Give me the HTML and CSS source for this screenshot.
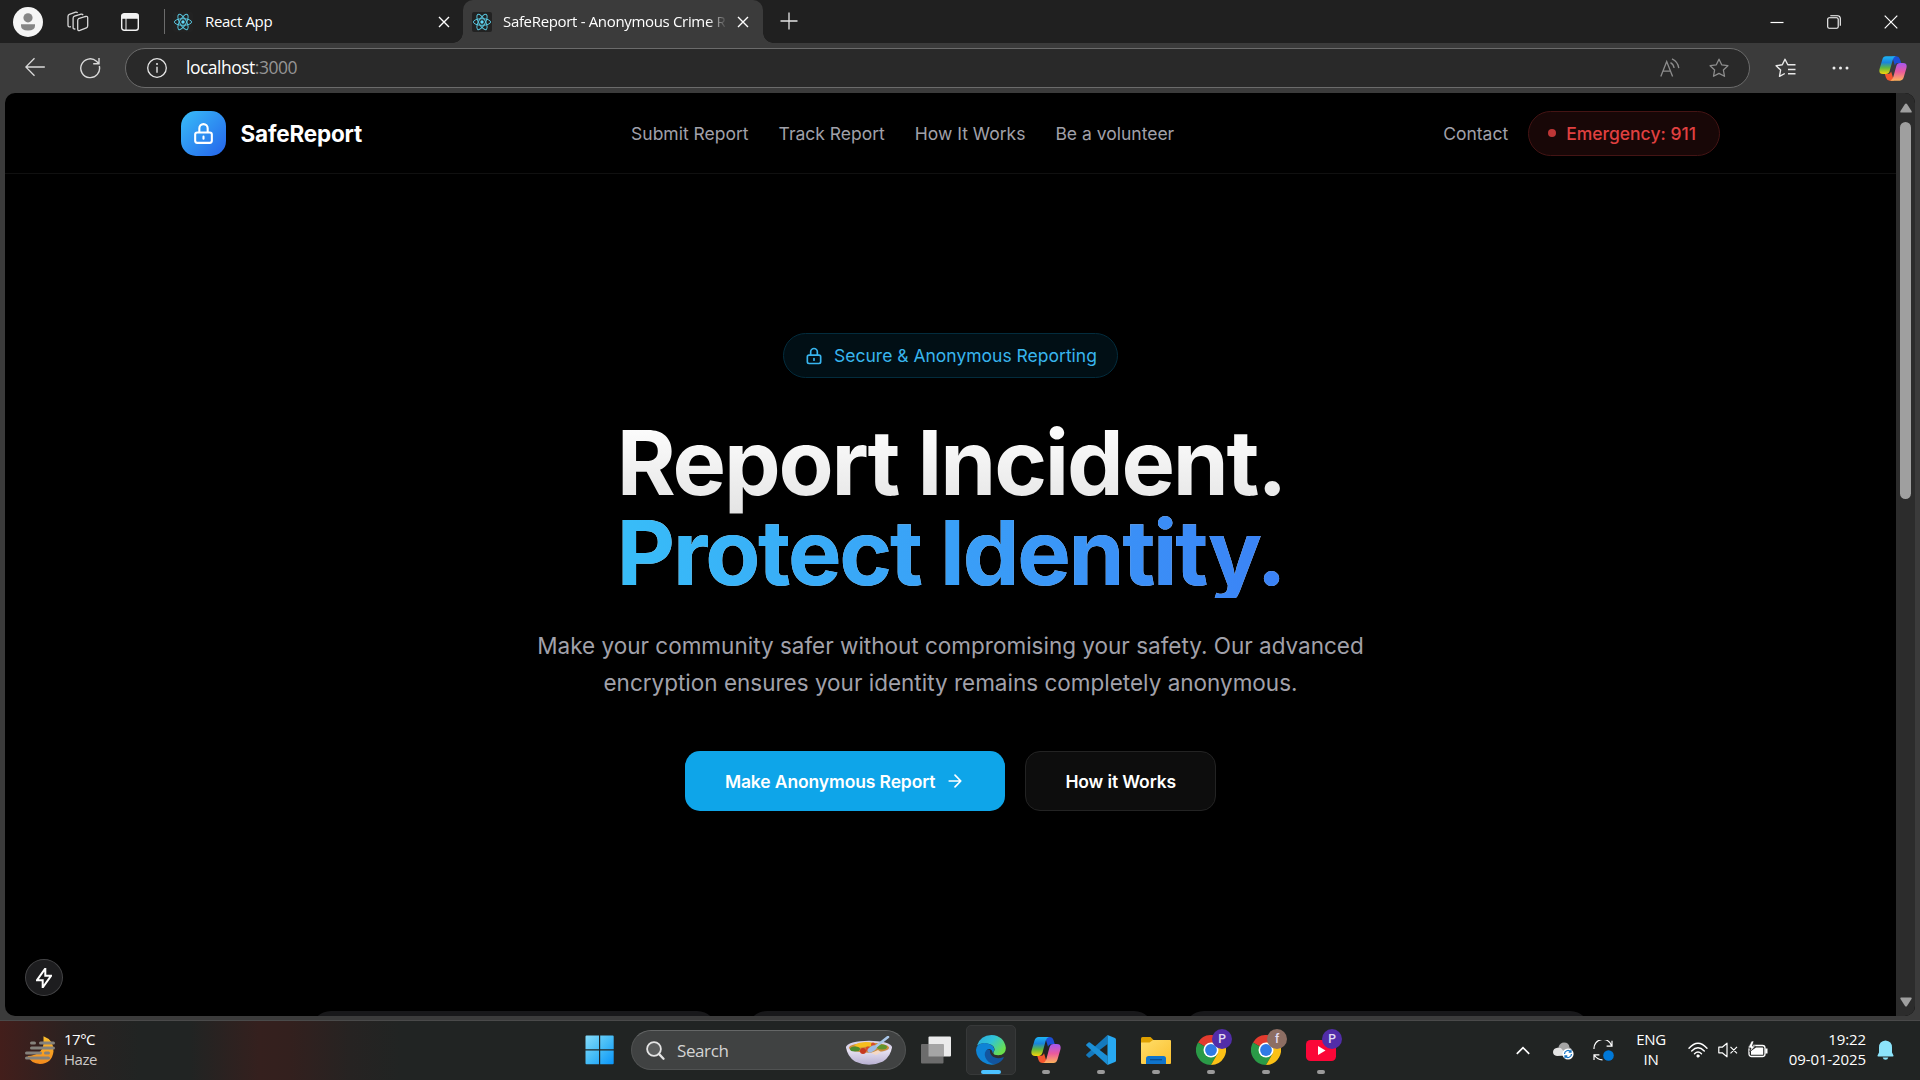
FILE: index.html
```html
<!DOCTYPE html>
<html lang="en">
<head>
<meta charset="utf-8">
<title>SafeReport - Anonymous Crime Reporting</title>
<link rel="stylesheet" href="styles.css">
</head>
<body>
<svg class="defs" width="0" height="0" aria-hidden="true">
  <defs>
    <linearGradient id="cpBlue" x1="0" y1="0" x2="0" y2="1"><stop offset="0" stop-color="#1db4f5"/><stop offset=".35" stop-color="#1a84dc"/><stop offset=".65" stop-color="#5fb840"/><stop offset="1" stop-color="#f7d40a"/></linearGradient>
    <linearGradient id="cpPink" x1="0" y1="0" x2="0" y2="1"><stop offset="0" stop-color="#a557f0"/><stop offset=".5" stop-color="#ea5a9c"/><stop offset="1" stop-color="#fdb25c"/></linearGradient>
    <linearGradient id="edgeTop" x1="0" y1="0" x2="1" y2=".6"><stop offset="0" stop-color="#2aa8dc"/><stop offset=".5" stop-color="#30c3d8"/><stop offset="1" stop-color="#6be04c"/></linearGradient>
    <linearGradient id="winFill" x1="0" y1="0" x2="1" y2="1"><stop offset="0" stop-color="#86dcfb"/><stop offset=".5" stop-color="#45bcf6"/><stop offset="1" stop-color="#0a95fa"/></linearGradient>
    <linearGradient id="folderFill" x1="0" y1="0" x2="1" y2="1"><stop offset="0" stop-color="#ffdd6a"/><stop offset="1" stop-color="#fbc02e"/></linearGradient>
    <linearGradient id="sunFill" x1="0" y1="0" x2="0" y2="1"><stop offset="0" stop-color="#fdbf2d"/><stop offset="1" stop-color="#f48a1c"/></linearGradient>
    <linearGradient id="bowlFill" x1="0" y1="0" x2="0" y2="1"><stop offset="0" stop-color="#f2eef9"/><stop offset="1" stop-color="#b8b0d2"/></linearGradient>
    <symbol id="react" viewBox="0 0 20 20">
      <rect width="20" height="20" rx="2" fill="#222"/>
      <g fill="none" stroke="#58c4dc" stroke-width="1"><ellipse cx="10" cy="10" rx="8.6" ry="3.3"/><ellipse cx="10" cy="10" rx="8.6" ry="3.3" transform="rotate(60 10 10)"/><ellipse cx="10" cy="10" rx="8.6" ry="3.3" transform="rotate(120 10 10)"/></g>
      <circle cx="10" cy="10" r="1.7" fill="#61dafb"/>
    </symbol>
    <symbol id="lock" viewBox="0 0 24 24"><path d="M12 15v2m-6 4h12a2 2 0 002-2v-6a2 2 0 00-2-2H6a2 2 0 00-2 2v6a2 2 0 002 2zm10-10V7a4 4 0 00-8 0v4h8z" fill="none" stroke="currentColor" stroke-width="2" stroke-linecap="round" stroke-linejoin="round"/></symbol>
    <symbol id="copilot" viewBox="0 0 30 28">
      <path d="M14 1h4.500q3 0 4 3l1.300 4.200h-4q-2 0-2.800 2.500z" fill="#1c4fd6"/>
      <path d="M16 27h-4.500q-3 0-4-3L6.200 19.800h4q2 0 2.800-2.500z" fill="#f4562f"/>
      <path d="M7.500 1H18q-2.500.8-3.300 3.800L11.500 16.500q-.9 3.400-4.200 3.400H4.200Q-.6 19.900.6 14.500L3.500 4.500Q4.600 1 7.500 1z" fill="url(#cpBlue)"/>
      <path d="M22.500 27H12q2.500-.8 3.300-3.800l3.200-11.700q.9-3.400 4.200-3.400h3.100q4.800 0 3.600 5.400l-2.900 10q-1.100 3.500-4 3.500z" fill="url(#cpPink)"/>
    </symbol>
    <symbol id="close" viewBox="0 0 12 12"><path d="M1 1l10 10M11 1L1 11" stroke="currentColor" stroke-width="1.400" fill="none"/></symbol>
    <symbol id="chrome" viewBox="0 0 30 30">
      <path d="M15 15L2 7.500A15 15 0 0 1 28 7.500z" fill="#e33b2e"/>
      <path d="M15 15L2 7.500A15 15 0 0 0 15 30L21.500 18.800z" fill="#2a9a47"/>
      <path d="M15 7.500H28A15 15 0 0 1 15 30L21.500 18.800z" fill="#fbc116"/>
      <circle cx="15" cy="15" r="7.500" fill="#fff"/><circle cx="15" cy="15" r="5.900" fill="#2f7ae5"/>
    </symbol>
  </defs>
</svg>

<div class="window">
  <header class="tabs">
    <div class="tabs-left">
      <svg class="avatar" viewBox="0 0 30 30"><circle cx="15" cy="15" r="15" fill="#f5f5f5"/><circle cx="15" cy="10.800" r="4.600" fill="#858585"/><path d="M8 17.300h14v1.400q0 4.800-7 4.800t-7-4.800z" fill="#858585"/></svg>
      <svg class="workspaces" viewBox="0 0 22 22" fill="none" stroke="#d8d8d8" stroke-width="1.300"><path d="M11.500 7.700l7.200-2.200q2-.5 2 1.300v8q0 1.500-1.300 2l-6.500 2.600q-2.200.8-2.200-1.400V9.700q0-1.500.8-2z"/><path d="M8.400 17.900q-2.300.5-2.300-1.500V7.200q0-1.500 1.400-2l6.600-2q1.300-.3 2 .9"/><path d="M4 15.700Q1 16.500 1 14.200V5.500Q1 4 2.400 3.400l6.200-2.200q1.300-.4 2 .7"/></svg>
      <svg class="vertical-tabs" viewBox="0 0 18 18"><rect x=".7" y=".7" width="16.600" height="16.600" rx="2.500" fill="none" stroke="#f2f2f2" stroke-width="1.400"/><path d="M1 1.500h16v3.700H1zM5 5v12" fill="#f2f2f2" stroke="#f2f2f2"/></svg>
    </div>
    <div class="tab tab-idle"><svg class="favicon"><use href="#react"/></svg><span class="tab-title">React App</span><svg class="tab-close"><use href="#close"/></svg></div>
    <div class="tab tab-active"><svg class="favicon"><use href="#react"/></svg><span class="tab-title">SafeReport - Anonymous Crime Reporting</span><svg class="tab-close"><use href="#close"/></svg></div>
    <svg class="new-tab" viewBox="0 0 18 18"><path d="M9 .5v17M.5 9h17" stroke="#e4e4e4" stroke-width="1.300"/></svg>
    <div class="win-controls">
      <svg viewBox="0 0 14 14"><path d="M.5 7.500h13" stroke="#fff" stroke-width="1.200"/></svg>
      <svg viewBox="0 0 14 14" fill="none" stroke="#fff" stroke-width="1.100"><rect x=".7" y="2.800" width="10.500" height="10.500" rx="1.500"/><path d="M3.300.8h7.200q2.800 0 2.800 2.800v7.200"/></svg>
      <svg viewBox="0 0 14 14"><path d="M.7.700l12.600 12.600M13.300.700L.7 13.300" stroke="#fff" stroke-width="1.200"/></svg>
    </div>
  </header>

  <div class="toolbar">
    <svg class="back" viewBox="0 0 20 20" fill="none" stroke="#dadada" stroke-width="1.300"><path d="M19.800 10H.8M9.500 1.200L.8 10l8.700 8.800"/></svg>
    <svg class="reload" viewBox="0 0 22 22" fill="none" stroke="#dadada" stroke-width="1.400"><path d="M20.300 9A9.400 9.400 0 1 1 17.500 4.300L20 6.800M20 1v5.800h-5.800"/></svg>
    <div class="address">
      <svg class="info" viewBox="0 0 20 20"><circle cx="10" cy="10" r="9.300" fill="none" stroke="#e6e6e6" stroke-width="1.300"/><path d="M10 8.800v6" stroke="#e6e6e6" stroke-width="1.400"/><circle cx="10" cy="6" r="1" fill="#e6e6e6"/></svg>
      <span class="url">localhost<span class="port">:3000</span></span>
      <svg class="read-aloud" viewBox="0 0 20 20" fill="none" stroke="#8d8d8d" stroke-width="1.300"><path d="M.8 18.500L6.700 3.500l5.900 15M3 13.200h7.500M10.500 4.600q3 1.600 3.600 5.400M12 .9q6 3 6.800 9.200"/></svg>
      <svg class="star" viewBox="0 0 20 20"><path d="M10 1.200l2.700 5.600 6.200.9-4.500 4.300 1.100 6.300L10 15.400l-5.500 2.900L5.600 12 1.100 7.700l6.200-.9z" fill="none" stroke="#8d8d8d" stroke-width="1.300" stroke-linejoin="round"/></svg>
    </div>
    <svg class="favorites" viewBox="0 0 21 20" fill="none" stroke="#e8e8e8" stroke-width="1.400" stroke-linejoin="round"><path d="M20.500 6.700h-7.700L10 1.200 7.300 6.800l-6.200.9L5.600 12l-1.100 6.300 5.300-2.800M13 11.500h7.500M13 15.700h7.500"/></svg>
    <svg class="more" viewBox="0 0 17 4" fill="#ececec"><circle cx="2" cy="2" r="1.500"/><circle cx="8.500" cy="2" r="1.500"/><circle cx="15" cy="2" r="1.500"/></svg>
    <svg class="copilot-button"><use href="#copilot"/></svg>
  </div>

  <div class="viewport">
    <div class="page">
      <nav class="site-header">
        <div class="nav-inner">
          <div class="brand"><span class="brand-mark"><svg><use href="#lock"/></svg></span><span class="brand-name">SafeReport</span></div>
          <div class="links"><span>Submit Report</span><span>Track Report</span><span>How It Works</span><span>Be a volunteer</span></div>
          <div class="nav-right"><span>Contact</span><span class="emergency"><i class="dot"></i>Emergency: 911</span></div>
        </div>
      </nav>
      <main class="hero">
        <div class="badge"><svg><use href="#lock"/></svg><span>Secure &amp; Anonymous Reporting</span></div>
        <h1 class="headline">Report Incident.<span class="accent">Protect Identity.</span></h1>
        <p class="lead">Make your community safer without compromising your safety. Our advanced encryption ensures your identity remains completely anonymous.</p>
        <div class="actions">
          <div class="btn primary">Make Anonymous Report<svg viewBox="0 0 24 24" fill="none" stroke="currentColor" stroke-width="2" stroke-linecap="round" stroke-linejoin="round"><path d="M5 12h14M12 5l7 7-7 7"/></svg></div>
          <div class="btn secondary">How it Works</div>
        </div>
      </main>
      <section class="cards"><div class="card"></div><div class="card"></div><div class="card"></div></section>
      <div class="dev-badge"><svg viewBox="0 0 16 20"><path d="M9.300.5v7.200h5.900L6.700 19.500v-7.200H.8z" fill="none" stroke="#fff" stroke-width="2"/></svg></div>
    </div>
    <div class="scrollbar">
      <svg viewBox="0 0 12 10"><path d="M6 .5q.6 0 1 .6l4.500 7q.7 1.400-.7 1.400H1.200Q-.2 9.500.5 8.100L5 1.100Q5.400.5 6 .5z" fill="#9f9f9f"/></svg>
      <div class="track"><div class="thumb"></div></div>
      <svg class="down" viewBox="0 0 12 10"><path d="M6 .5q.6 0 1 .6l4.500 7q.7 1.400-.7 1.400H1.200Q-.2 9.500.5 8.100L5 1.100Q5.400.5 6 .5z" fill="#9f9f9f"/></svg>
    </div>
  </div>
</div>

<footer class="taskbar">
  <div class="weather">
    <svg viewBox="0 0 30 30"><path d="M18.500 1.200Q29 5 28.500 16.500 27 28.500 15 29 6 28.500 2.500 21 17 20.500 18.500 9z" fill="url(#sunFill)"/><path d="M6.500 8h3M15.500 8h13M6.500 13h22M1.500 18h14M20.500 18h3M1.500 23h22" stroke="#85827c" stroke-width="3" stroke-linecap="round"/></svg>
    <div class="weather-text"><span>17°C</span><span class="muted">Haze</span></div>
  </div>
  <div class="apps">
    <div class="app"><svg viewBox="0 0 30 30" class="i30"><path d="M.5 1.500q0-1 1-1H14v13.800H.5zM15.200.5h12.500q1 0 1 1v12.800H15.200zM.5 15.500H14v13.700H1.500q-1 0-1-1zM15.200 15.500h13.500v12.700q0 1-1 1H15.200z" fill="url(#winFill)"/></svg></div>
    <div class="search">
      <svg class="glass" viewBox="0 0 19 19" fill="none" stroke="#e4e4e4"><circle cx="8" cy="8" r="6.900" stroke-width="1.800" fill="#5c5e5e"/><path d="M12.900 12.900l4.600 4.800" stroke-width="2.300" stroke-linecap="round"/></svg>
      <span>Search</span>
      <svg class="bowl" viewBox="0 0 46 29"><path d="M0 11q1 9 9 14.500 14 6.500 28 0Q45 20 46 11z" fill="url(#bowlFill)"/><ellipse cx="23" cy="11" rx="23" ry="6.200" fill="#d9d3ea"/><ellipse cx="23" cy="11.800" rx="20" ry="5" fill="#c98d3c"/><path d="M8 9q9-5 19-2l-2 3-13 2z" fill="#f7bd1e"/><ellipse cx="9" cy="13" rx="5" ry="2.500" fill="#4c8a2c"/><ellipse cx="36" cy="11" rx="5" ry="2.500" fill="#61952f"/><circle cx="17" cy="15" r="3" fill="#c63820"/><circle cx="22" cy="13" r="2.500" fill="#d94a28"/><circle cx="27" cy="8.500" r="2" fill="#d94a28"/><path d="M25 17l7-3 3 2-5 3z" fill="#f5d9c6"/><path d="M42 1L28 12" stroke="#a9c6e8" stroke-width="2.600" stroke-linecap="round"/><ellipse cx="26" cy="13" rx="5" ry="2.700" transform="rotate(-30 26 13)" fill="#9dbbe4"/></svg>
    </div>
    <div class="app"><svg viewBox="0 0 30 28" class="taskview"><rect x="7.500" y=".5" width="22.500" height="20" rx="1" fill="#ebebeb"/><rect x="0" y="8" width="22.500" height="19.500" rx="1" fill="#6c6c6c"/><path d="M7.500 8h15v12.500h-15z" fill="#a5a5a5"/></svg></div>
    <div class="app current"><svg viewBox="0 0 30 30" class="i30"><path d="M1 10.500Q4.500.2 15.500 0 28 .8 29.800 12.500q.5 7.500-7.500 7.800-5.500 0-4.800-2.800 2.800-4.500-1.700-7.500Q8 6.500 1 10.500z" fill="url(#edgeTop)"/><path d="M0 15Q.3 8.500 8.300 8q8.200.5 9.900 5.500.3 2.200-1.500 4.500-.6-4.500-4.700-4-3 2.500-1.200 7.700 2.500 6.300 9.200 7.300-6.500 2.200-13-2Q.3 22.500 0 15z" fill="#0f84d6"/><path d="M11.800 14q-4.500 3.200-2.400 8.400Q12.500 29.500 20 29q5.500-2 7.800-6.300.2-.8-.8-.4-5.500 2.200-10-.5-3.500-2.600-3-6.500z" fill="#12559f"/></svg></div>
    <div class="app open"><svg class="cp"><use href="#copilot"/></svg></div>
    <div class="app open"><svg viewBox="0 0 30 30" class="i30"><path d="M21.500 0v9L4 22.500q-.8.500-1.500 0L.5 20.800q-.8-.8 0-1.600z" fill="#1479bd"/><path d="M21.500 30v-9L4 7.500Q3.200 7 2.500 7.500L.5 9.200q-.8.800 0 1.600z" fill="#1b8fd6"/><path d="M21.500 0L29 3q1 .5 1 1.500v21q0 1-1 1.500l-7.500 3z" fill="#27a9f2"/></svg></div>
    <div class="app open"><svg viewBox="0 0 30 27" class="folder"><path d="M0 1.500Q0 0 1.500 0h8L13 3.500V7H0z" fill="#dfa000"/><path d="M0 5.500h8.500L12 3h17q1 0 1 1v22q0 1-1 1H1q-1 0-1-1z" fill="url(#folderFill)"/><path d="M5 27v-5.500Q5 19 7.500 19h15q2.500 0 2.500 2.500V27z" fill="#0f74cc"/><path d="M9 22.700h12" stroke="#094a8c" stroke-width="1.200"/></svg></div>
    <div class="app open"><svg class="i30"><use href="#chrome"/></svg><b class="profile purple">P</b></div>
    <div class="app open"><svg class="i30"><use href="#chrome"/></svg><b class="profile brown">f</b></div>
    <div class="app open"><svg viewBox="0 0 30 21" class="youtube"><rect width="30" height="21" rx="4.500" fill="#fb0738"/><path d="M12 6l7.500 4.500L12 15z" fill="#fff"/></svg><b class="profile purple">P</b></div>
  </div>
  <div class="tray">
    <div class="tray-cell"><svg viewBox="0 0 14 9" class="chevron"><path d="M.8 7.800L7 1.600l6.200 6.200" fill="none" stroke="#fff" stroke-width="1.700"/></svg></div>
    <div class="tray-cell"><svg viewBox="0 0 21 18" class="cloud"><path d="M5.500 5Q7 .500 11 .500q5 0 5.500 5 2 .5 2.500 3l-7 4z" fill="#a5a5a5"/><path d="M4 14q-4-.5-4-4 .3-4 4.500-4.300Q8 5 10 8.500l4 5z" fill="#e4e4e4"/><circle cx="15" cy="12" r="5.600" fill="#fff"/><path d="M11.500 12a3.500 3.500 0 0 1 6.200-2.200M18.500 12a3.500 3.500 0 0 1-6.200 2.200M18 7.800v2.300h-2.300M12 16.200v-2.300h2.300" fill="none" stroke="#1674c4" stroke-width="1.200"/></svg></div>
    <div class="tray-cell"><svg viewBox="0 0 21 21" class="sync"><path d="M1 9A9 9 0 0 1 18.500 5.500M19 .8v5.400h-5.400M1 20v-5.200h5.400M1.300 15A9.500 9.500 0 0 0 9.500 19.800" fill="none" stroke="#fff" stroke-width="1.200"/><circle cx="15.500" cy="15.500" r="5.300" fill="#0078d7"/></svg></div>
    <div class="lang"><span>ENG</span><span>IN</span></div>
    <div class="status">
      <svg viewBox="0 0 20 16" class="wifi" fill="none" stroke="#fff" stroke-width="1.400" stroke-linecap="round"><path d="M1 6.200Q10-3.700 19 6.200M3.700 9q6.300-6.500 12.600 0M6.500 11.700q3.500-3.400 7 0"/><circle cx="10" cy="14" r="1.200" fill="#fff" stroke-width=".8"/></svg>
      <svg viewBox="0 0 20 16" class="speaker" fill="none" stroke="#fff" stroke-width="1.200" stroke-linejoin="round"><path d="M.8 5.200h3.400L9 1.200v13.600l-4.800-4H.8zM12.500 4.800l6.500 6.500M19 4.800l-6.500 6.500"/></svg>
      <svg viewBox="0 0 20 17" class="battery"><rect x="1" y="4.500" width="16" height="11" rx="2.500" fill="none" stroke="#fff" stroke-width="1.300"/><path d="M3 13.700V10l5-3.500h6.500q.7 0 .7.700v6.500z" fill="#fff"/><path d="M18.400 7.500v5" stroke="#fff" stroke-width="2.200"/><path d="M3.500 0L0 7h3L1.800 11 7.500 5H4.300L6 0z" fill="#fff" stroke="#212322" stroke-width=".7"/></svg>
    </div>
    <div class="clock"><span>19:22</span><span>09-01-2025</span></div>
    <svg viewBox="0 0 17 20" class="bell"><path d="M8.500.5Q15 1 15 7.500v5l1.500 3q.2 1-.8 1H1.300q-1 0-.8-1l1.500-3v-5Q2 1 8.500.5z" fill="#8ce4fb"/><path d="M5.700 17.500h5.600q-.5 2.200-2.800 2.200t-2.800-2.200z" fill="#8ce4fb"/></svg>
  </div>
</footer>
</body>
</html>
```
FILE: styles.css
```css
* { box-sizing: border-box; }
body { margin: 0; width: 1920px; height: 1080px; overflow: hidden; display: flex; flex-direction: column; background: #212322; font-family: "Open Sans", "Noto Sans", sans-serif; color: #fff; }
svg { display: block; flex: none; }
.defs { position: absolute; }
.window { height: 1021px; display: flex; flex-direction: column; background: #3b3b3b; border-bottom: 1px solid #4a4a4a; }

/* Tab strip */
.tabs { height: 43px; display: flex; align-items: center; background: #202020; }
.tabs-left { width: 165px; height: 25px; padding-left: 13px; display: flex; align-items: center; border-right: 1px solid #6c6c6c; }
.avatar { width: 30px; height: 30px; }
.workspaces { width: 22px; height: 22px; margin-left: 24px; }
.vertical-tabs { width: 18px; height: 18px; margin-left: 32px; }
.tab { height: 43px; display: flex; align-items: center; }
.tab-idle { width: 298px; padding: 0 13px 0 8px; }
.tab-active { position: relative; width: 300px; padding: 0 14px 0 9px; background: #3b3b3b; border-radius: 10px 10px 0 0; }
.tab-active::before, .tab-active::after { content: ""; position: absolute; bottom: 0; width: 10px; height: 10px; }
.tab-active::before { left: -10px; background: radial-gradient(circle at 0 0, #202020 9.5px, #3b3b3b 10px); }
.tab-active::after { right: -10px; background: radial-gradient(circle at 100% 0, #202020 9.5px, #3b3b3b 10px); }
.favicon { width: 20px; height: 20px; }
.tab-title { flex: 1; margin: 0 12px; padding-bottom: 2px; overflow: hidden; white-space: nowrap; font-size: 15px; line-height: 20px; letter-spacing: -.33px; }
.tab-active .tab-title { margin-left: 11px; -webkit-mask-image: linear-gradient(90deg, #000 205px, transparent 224px); mask-image: linear-gradient(90deg, #000 205px, transparent 224px); }
.tab-close { width: 12px; height: 12px; }
.new-tab { width: 18px; height: 18px; margin: 0 0 1px 17px; }
.win-controls { margin-left: auto; padding-right: 22px; display: flex; gap: 43px; }
.win-controls svg { width: 14px; height: 14px; }

/* Toolbar */
.toolbar { height: 50px; display: flex; align-items: center; padding: 0 13px 0 25px; }
.back { width: 20px; height: 20px; margin-bottom: 2px; }
.reload { width: 22px; height: 22px; margin: 0 0 1px 34px; }
.address { width: 1625px; height: 40px; margin-left: 24px; padding: 0 20px 0 21px; display: flex; align-items: center; border: 1px solid #6b6b6b; border-radius: 20px; background: #292929; }
.info { width: 20px; height: 20px; }
.url { margin-left: 19px; padding-bottom: 2px; font-size: 17.5px; letter-spacing: -.5px; }
.port { color: #959595; }
.read-aloud { width: 20px; height: 20px; margin: 0 0 1px auto; }
.star { width: 20px; height: 20px; margin-left: 29px; }
.favorites { width: 21px; height: 20px; margin-left: 25px; }
.more { width: 17px; height: 4px; margin-left: 36px; }
.copilot-button { width: 28px; height: 27px; margin-left: auto; }

/* Page viewport */
.viewport { flex: none; width: 1910px; height: 923px; margin-left: 5px; display: flex; border-radius: 10px; overflow: hidden; background: #000; }
.page { position: relative; width: 1891px; height: 923px; overflow: hidden; font-family: Inter, sans-serif; }
.site-header { height: 81px; border-bottom: 1px solid #101010; }
.nav-inner { width: 1600px; height: 80px; margin: 0 auto; padding: 0 30px; display: flex; align-items: center; justify-content: space-between; font-size: 17.5px; line-height: 25px; color: #a1a1aa; }
.brand { display: flex; align-items: center; gap: 15px; }
.brand-mark { width: 45px; height: 45px; display: grid; place-items: center; border-radius: 15px; background: linear-gradient(135deg, #38bdf8, #2563eb); color: #fff; }
.brand-mark svg { width: 25px; height: 25px; }
.brand-name { font-size: 22.5px; font-weight: 700; letter-spacing: -.18px; color: #fff; }
.links { display: flex; gap: 30px; }
.nav-right { display: flex; align-items: center; gap: 20px; }
.emergency { height: 45px; padding: 0 23.5px 0 19px; display: flex; align-items: center; gap: 10px; border: 1px solid #441414; border-radius: 23px; background: #180707; color: #e04040; font-weight: 500; }
.dot { width: 8px; height: 8px; border-radius: 50%; background: #be3636; }

.hero { display: flex; flex-direction: column; align-items: center; padding-top: 159px; }
.badge { height: 45px; padding: 0 20px; display: flex; align-items: center; gap: 10px; border: 1px solid #032c3d; border-radius: 23px; background: #010f15; color: #38b5ee; font-size: 17.5px; }
.badge svg { width: 20px; height: 20px; }
.headline { margin: 40px 0 0 1px; font-size: 90px; line-height: 90px; font-weight: 700; letter-spacing: -2.25px; color: transparent; background: linear-gradient(180deg, #fff, #ccc); -webkit-background-clip: text; background-clip: text; }
.accent { display: block; background: linear-gradient(90deg, #38bdf8, #3b82f6); -webkit-background-clip: text; background-clip: text; }
.lead { width: 840px; height: 74px; margin: 30px 0 0; text-align: center; font-size: 22.5px; line-height: 36.6px; color: #a1a1aa; }
.actions { display: flex; gap: 20px; margin-top: 49px; font-size: 17.5px; font-weight: 600; letter-spacing: -.12px; }
.btn { height: 60px; padding: 0 40px; display: flex; align-items: center; gap: 10px; border-radius: 15px; white-space: nowrap; }
.btn svg { width: 20px; height: 20px; }
.primary { background: #0ea5e9; }
.secondary { border: 1px solid #232323; background: #0d0d0d; padding: 0 39px; }
.cards { width: 1280px; margin: 200px auto 0; display: grid; grid-template-columns: repeat(3, 1fr); gap: 30px; }
.card { height: 200px; border-radius: 20px; background: #18181a; }
.dev-badge { position: absolute; left: 20px; bottom: 20px; width: 38px; height: 37px; display: grid; place-items: center; border: 1px solid #434345; border-radius: 50%; background: #1d1d1f; }
.dev-badge svg { width: 16px; height: 20px; }

.scrollbar { width: 19px; padding: 10px 0 9px; display: flex; flex-direction: column; align-items: center; background: #2c2c2c; }
.scrollbar svg { width: 12px; height: 10px; }
.track { flex: 1; padding-top: 9px; }
.thumb { width: 11px; height: 377px; border-radius: 6px; background: #9f9f9f; }
.down { transform: rotate(180deg); }

/* Taskbar */
.taskbar { height: 59px; padding-bottom: 1px; display: flex; align-items: center; background: linear-gradient(90deg, #431e1b 0, #2a2221 70px, #212423 140px, #212423 190px, #35201e 260px, #33201e 290px, #262322 350px, #212423 400px, #212423 100%); font-size: 15px; }
.weather { width: 572px; padding-left: 25px; display: flex; align-items: center; gap: 9px; }
.weather svg { width: 30px; height: 30px; margin-top: -1px; }
.weather-text, .lang, .clock { display: flex; flex-direction: column; line-height: 20px; padding-bottom: 2px; }
.weather-text { letter-spacing: -.5px; }
.muted { color: #ccc8c7; }
.apps { display: flex; align-items: center; }
.app { position: relative; width: 55px; height: 50px; display: grid; place-items: center; }
.i30 { width: 30px; height: 30px; }
.search { width: 275px; height: 40px; margin: 0 2px 0 4px; padding: 0 13px 0 14px; display: flex; align-items: center; border: 1px solid #505252; border-top-color: #656767; border-radius: 20px; background: #404242; font-size: 17px; letter-spacing: -.4px; color: #d4d4d4; }
.glass { width: 19px; height: 19px; margin-right: 12px; }
.bowl { width: 46px; height: 29px; margin-left: auto; }
.taskview { width: 30px; height: 28px; }
.cp { width: 30px; height: 28px; }
.folder { width: 30px; height: 27px; }
.youtube { width: 30px; height: 21px; }
.current::before { content: ""; position: absolute; inset: 0 2px 0 3px; z-index: -1; border: 1px solid #373939; border-radius: 5px; background: #2d2f2f; }
.current { z-index: 0; }
.current::after, .open::after { content: ""; position: absolute; left: 50%; bottom: 1px; width: 8px; height: 4px; margin-left: -4px; border-radius: 2px; background: #9a9a9a; }
.current::after { width: 20px; margin-left: -10px; background: #4cc2ff; }
.profile { position: absolute; left: 29px; top: 4px; width: 20px; height: 20px; border-radius: 50%; text-align: center; font: 500 12px/20px Roboto, sans-serif; color: #e2dcf2; }
.purple { background: #512da8; }
.brown { background: #8d6e63; }
.tray { margin-left: auto; padding-right: 26px; display: flex; align-items: center; }
.tray-cell { width: 40px; display: grid; place-items: center; }
.chevron { width: 14px; height: 9px; }
.cloud { width: 21px; height: 18px; margin-top: 2px; }
.sync { width: 21px; height: 21px; }
.lang { width: 56px; align-items: center; letter-spacing: -.3px; }
.status { display: flex; align-items: center; gap: 10px; margin-left: 9px; }
.wifi { width: 20px; height: 16px; }
.speaker { width: 20px; height: 16px; }
.battery { width: 20px; height: 17px; margin-bottom: 2px; }
.clock { width: 98px; align-items: flex-end; letter-spacing: -.1px; }
.bell { width: 17px; height: 20px; margin-left: 11px; }
```
